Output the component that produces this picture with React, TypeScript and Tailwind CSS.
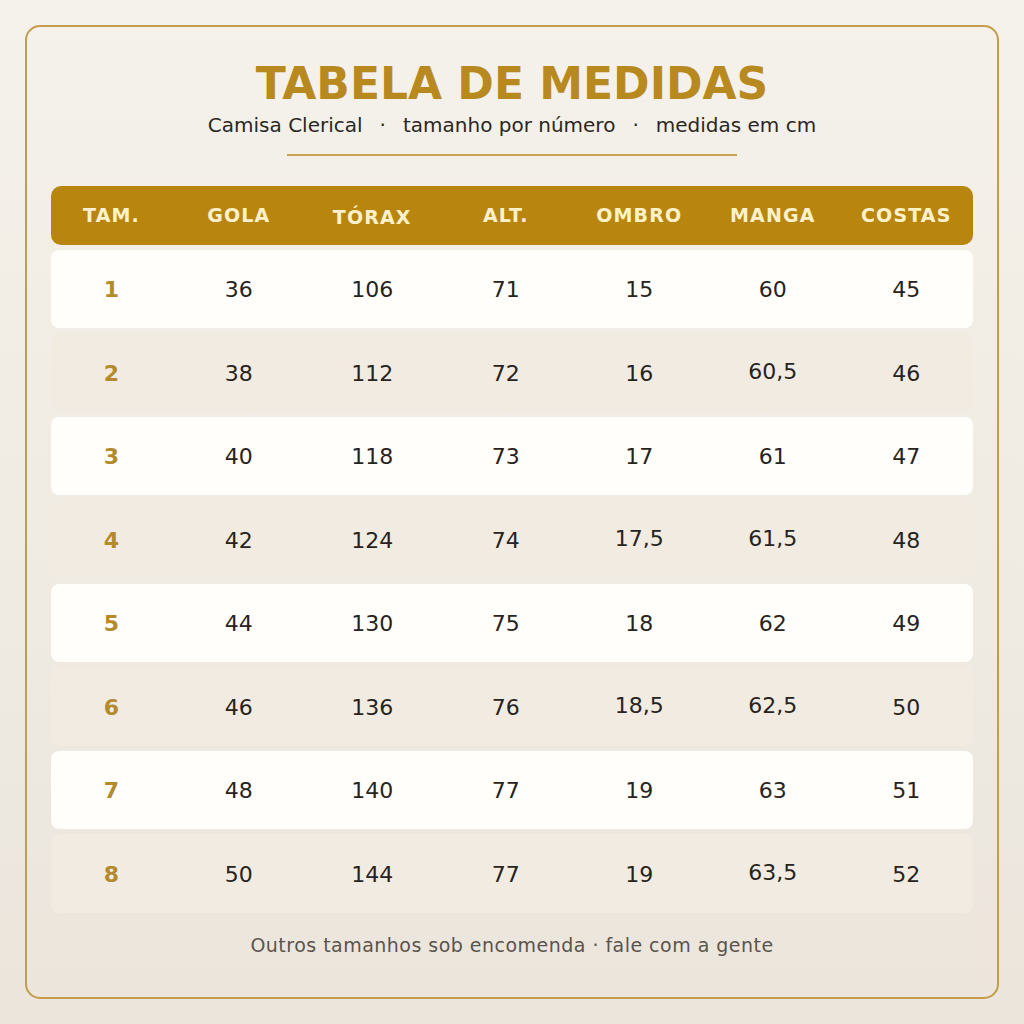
import React from 'react';

const headers = ['TAM.', 'GOLA', 'TÓRAX', 'ALT.', 'OMBRO', 'MANGA', 'COSTAS'];

const rows: string[][] = [
  ['1', '36', '106', '71', '15', '60', '45'],
  ['2', '38', '112', '72', '16', '60,5', '46'],
  ['3', '40', '118', '73', '17', '61', '47'],
  ['4', '42', '124', '74', '17,5', '61,5', '48'],
  ['5', '44', '130', '75', '18', '62', '49'],
  ['6', '46', '136', '76', '18,5', '62,5', '50'],
  ['7', '48', '140', '77', '19', '63', '51'],
  ['8', '50', '144', '77', '19', '63,5', '52'],
];

export default function App() {
  return (
    <div className="w-[1024px] h-[1024px] bg-gradient-to-b from-[#f5f2eb] to-[#ebe5dc] p-[25px] font-['DejaVu_Sans',sans-serif]">
      <div className="h-full rounded-[15px] border-2 border-[#c49c4c] px-[24px] pt-[35px] flex flex-col items-center">
        {/* Title */}
        <h1 className="text-[44px] leading-none font-bold text-[#b8891e]">TABELA DE MEDIDAS</h1>
        <p className="mt-[7px] text-[20px] leading-[24px] text-[#2b2724]">
          Camisa Clerical<span className="mx-[17px]">·</span>tamanho por número<span className="mx-[17px]">·</span>medidas em cm
        </p>
        <div className="mt-[17px] w-[450px] h-[1.5px] bg-[#c9a255]" />

        {/* Table */}
        <div className="mt-[30px] w-full">
          <div className="grid grid-cols-[121px_repeat(6,1fr)] h-[59px] items-center rounded-[10px] bg-[#b8860f] text-[19px] font-bold tracking-[0.06em] text-[#fcf1cb]">
            {headers.map((h) => (
              <div key={h} className={`text-center ${h === 'TÓRAX' ? 'translate-y-[2px]' : ''}`}>{h}</div>
            ))}
          </div>
          <div className="mt-[5px] flex flex-col gap-[5px]">
            {rows.map((r, i) => (
              <div
                key={r[0]}
                className={`grid grid-cols-[121px_repeat(6,1fr)] h-[78.5px] items-center rounded-[8px] ${i % 2 === 0 ? 'bg-[#fffefb]' : 'bg-[#f1ebe2]'}`}
              >
                {r.map((v, j) => (
                  <div
                    key={j}
                    className={`text-center text-[22px] ${j === 0 ? 'font-bold text-[#b38b2c]' : 'text-[#272320]'} ${v.includes(',') ? '-translate-y-[1px]' : 'translate-y-[1px]'}`}
                  >
                    {v}
                  </div>
                ))}
              </div>
            ))}
          </div>
        </div>

        <p className="mt-[21px] text-[19px] leading-[22px] tracking-[0.025em] text-[#5a544d]">
          Outros tamanhos sob encomenda · fale com a gente
        </p>
      </div>
    </div>
  );
}
